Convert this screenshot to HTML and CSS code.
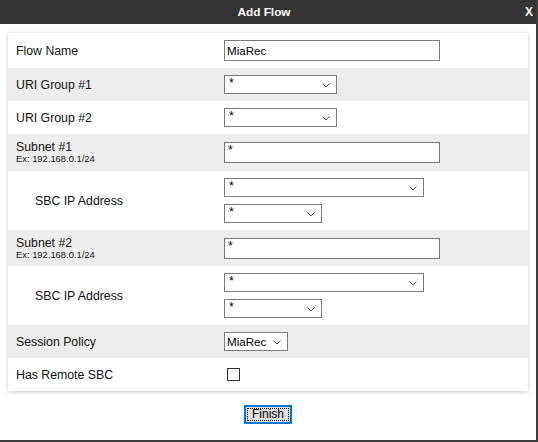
FILE: index.html
```html
<!DOCTYPE html>
<html>
<head>
<meta charset="utf-8">
<link rel="stylesheet" href="styles.css">
</head>
<body>
<div class="dialog">
  <div class="titlebar"><span class="title">Add Flow</span><span class="close">X</span></div>
  <div class="content">
    <div class="card">
      <div class="row">
        <div class="label">Flow Name</div>
        <div class="ctl"><div class="input w216">MiaRec</div></div>
      </div>
      <div class="row alt">
        <div class="label">URI Group #1</div>
        <div class="ctl"><div class="select w113"><span class="val">*</span><svg class="chev" width="8" height="5" viewBox="0 0 8 5"><path d="M0.5 0.5L4 4L7.5 0.5" fill="none" stroke="#555" stroke-width="1"/></svg></div></div>
      </div>
      <div class="row">
        <div class="label">URI Group #2</div>
        <div class="ctl"><div class="select w113"><span class="val">*</span><svg class="chev" width="8" height="5" viewBox="0 0 8 5"><path d="M0.5 0.5L4 4L7.5 0.5" fill="none" stroke="#555" stroke-width="1"/></svg></div></div>
      </div>
      <div class="row alt">
        <div class="label"><span class="main">Subnet #1</span><span class="sub">Ex: 192.168.0.1/24</span></div>
        <div class="ctl"><div class="input w216 star">*</div></div>
      </div>
      <div class="row">
        <div class="label indent">SBC IP Address</div>
        <div class="ctl stack">
          <div class="select w200"><span class="val">*</span><svg class="chev" width="8" height="5" viewBox="0 0 8 5"><path d="M0.5 0.5L4 4L7.5 0.5" fill="none" stroke="#555" stroke-width="1"/></svg></div>
          <div class="select w98"><span class="val">*</span><svg class="chev" width="8" height="5" viewBox="0 0 8 5"><path d="M0.5 0.5L4 4L7.5 0.5" fill="none" stroke="#555" stroke-width="1"/></svg></div>
        </div>
      </div>
      <div class="row alt tall">
        <div class="label"><span class="main">Subnet #2</span><span class="sub">Ex: 192.168.0.1/24</span></div>
        <div class="ctl"><div class="input w216 star">*</div></div>
      </div>
      <div class="row">
        <div class="label indent">SBC IP Address</div>
        <div class="ctl stack">
          <div class="select w200"><span class="val">*</span><svg class="chev" width="8" height="5" viewBox="0 0 8 5"><path d="M0.5 0.5L4 4L7.5 0.5" fill="none" stroke="#555" stroke-width="1"/></svg></div>
          <div class="select w98"><span class="val">*</span><svg class="chev" width="8" height="5" viewBox="0 0 8 5"><path d="M0.5 0.5L4 4L7.5 0.5" fill="none" stroke="#555" stroke-width="1"/></svg></div>
        </div>
      </div>
      <div class="row alt">
        <div class="label">Session Policy</div>
        <div class="ctl"><div class="select w64"><span class="val text">MiaRec</span><svg class="chev" width="8" height="5" viewBox="0 0 8 5"><path d="M0.5 0.5L4 4L7.5 0.5" fill="none" stroke="#555" stroke-width="1"/></svg></div></div>
      </div>
      <div class="row">
        <div class="label">Has Remote SBC</div>
        <div class="ctl"><div class="check"></div></div>
      </div>
    </div>
    <div class="actions"><button class="btn"><span class="focus">Finish</span></button></div>
  </div>
</div>
</body>
</html>
```

FILE: styles.css
```css
html, body {
  margin: 0;
  padding: 0;
  background: #fff;
}
.dialog {
  width: 538px;
  height: 442px;
  box-sizing: border-box;
  border-right: 2px solid #3d3d3d;
  border-bottom: 2px solid #3d3d3d;
  background: #fff;
  font-family: "Liberation Sans", Arial, sans-serif;
  font-size: 12.3px;
  color: #111;
}
.titlebar {
  height: 24px;
  background: #333;
  color: #fff;
  display: flex;
  align-items: center;
  font-weight: bold;
}
.title {
  flex: 1;
  text-align: center;
  padding-left: 3px;
  font-size: 11.8px;
}
.close {
  padding-right: 3px;
  font-size: 12px;
}
.content {
  padding: 9px 8px 0;
}
.card {
  background: #fff;
  box-shadow: 0 1px 4px rgba(0, 0, 0, 0.22);
}
.row {
  display: grid;
  grid-template-columns: 208px 1fr;
  align-items: center;
  padding: 7px 8px;
  min-height: 33px;
  box-sizing: border-box;
}
.row.tall {
  padding: 7px 8px 6px;
}
.row.alt {
  background: #ededed;
}
.label {
  line-height: 14px;
}
.label .main {
  display: block;
  line-height: 13px;
}
.label .sub {
  display: block;
  font-size: 9.4px;
  line-height: 10px;
}
.label.indent {
  padding-left: 19px;
}
.ctl {
  display: flex;
}
.stack {
  flex-direction: column;
  gap: 7px;
}
.input {
  height: 21px;
  box-sizing: border-box;
  border: 1px solid #7a7a7a;
  background: #fff;
  padding: 0 2px;
  line-height: 19px;
  font-size: 11.6px;
  color: #000;
}
.input.star {
  padding-left: 3px;
  line-height: 14px;
  font-size: 12.5px;
}
.select {
  height: 19px;
  box-sizing: border-box;
  border: 1px solid #7a7a7a;
  background: #fff;
  display: flex;
  justify-content: space-between;
  align-items: flex-start;
  padding: 0 6px 0 4px;
  color: #000;
  font-size: 12.5px;
}
.select .val {
  line-height: 14px;
}
.select .val.text {
  line-height: 17px;
  margin-left: -2px;
  font-size: 11.6px;
}
.select .chev {
  margin-top: 7px;
}
.w216 { width: 216px; }
.w113 { width: 113px; }
.w200 { width: 200px; }
.w98 { width: 98px; }
.w64 { width: 64px; }
.check {
  width: 13px;
  height: 13px;
  box-sizing: border-box;
  border: 1px solid #333;
  background: #fff;
  margin-left: 3px;
}
.actions {
  display: flex;
  justify-content: center;
  padding-top: 14px;
}
.btn {
  width: 48px;
  height: 19px;
  box-sizing: border-box;
  border: 2px solid #0078d7;
  background: #e1e1e1;
  padding: 1px;
  margin: 0;
  font-family: "Liberation Sans", Arial, sans-serif;
  font-size: 12px;
  color: #000;
}
.btn .focus {
  display: block;
  height: 100%;
  box-sizing: border-box;
  border: 1px dotted #000;
  line-height: 11px;
}
```
